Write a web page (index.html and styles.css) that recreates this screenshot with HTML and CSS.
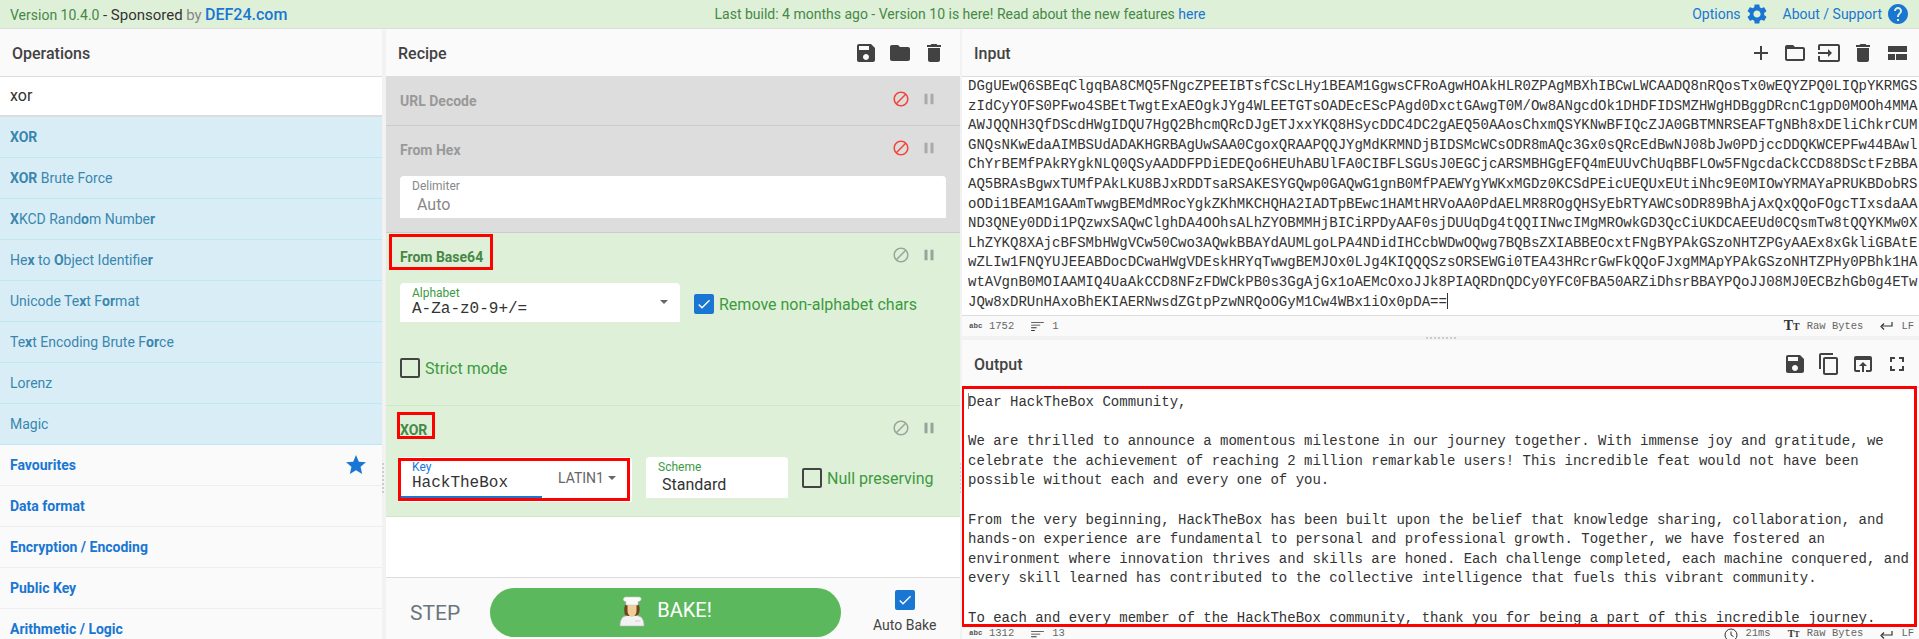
FILE: index.html
```html
<!DOCTYPE html>
<html lang="en">
<head>
    <meta charset="UTF-8">
    <title>CyberChef</title>
    <link rel="stylesheet" href="styles.css">
</head>
<body>
<div id="banner">
    <div class="banner-left"><span class="ver">Version 10.4.0</span> <span class="dark">- Sponsored</span> <span class="grey">by</span> <span class="sponsor">DEF24.com</span></div>
    <div class="banner-mid">Last build: 4 months ago - Version 10 is here! Read about the new features <span class="link">here</span></div>
    <div class="banner-right">
        <span class="link">Options</span>
        <svg class="ico-24 blue" viewBox="0 0 24 24"><path d="M19.14 12.94c.04-.3.06-.61.06-.94 0-.32-.02-.64-.07-.94l2.03-1.58c.18-.14.23-.41.12-.61l-1.92-3.32c-.12-.22-.37-.29-.59-.22l-2.39.96c-.5-.38-1.03-.7-1.62-.94l-.36-2.54c-.04-.24-.24-.41-.48-.41h-3.84c-.24 0-.43.17-.47.41l-.36 2.54c-.59.24-1.13.57-1.62.94l-2.39-.96c-.22-.08-.47 0-.59.22L2.74 8.87c-.12.21-.08.47.12.61l2.03 1.58c-.05.3-.09.63-.09.94s.02.64.07.94l-2.03 1.58c-.18.14-.23.41-.12.61l1.92 3.32c.12.22.37.29.59.22l2.39-.96c.5.38 1.03.7 1.62.94l.36 2.54c.05.24.24.41.48.41h3.84c.24 0 .44-.17.47-.41l.36-2.54c.59-.24 1.13-.56 1.62-.94l2.39.96c.22.08.47 0 .59-.22l1.92-3.32c.12-.22.07-.47-.12-.61l-2.01-1.58zM12 15.6c-1.98 0-3.6-1.62-3.6-3.6s1.62-3.6 3.6-3.6 3.6 1.62 3.6 3.6-1.62 3.6-3.6 3.6z"/></svg>
        <span class="link about">About / Support</span>
        <svg class="ico-24 blue" viewBox="0 0 24 24"><path d="M12 2C6.48 2 2 6.48 2 12s4.48 10 10 10 10-4.48 10-10S17.52 2 12 2zm1 17h-2v-2h2v2zm2.07-7.75l-.9.92C13.45 12.9 13 13.5 13 15h-2v-.5c0-1.1.45-2.1 1.17-2.83l1.24-1.26c.37-.36.59-.86.59-1.41 0-1.1-.9-2-2-2s-2 .9-2 2H8c0-2.21 1.79-4 4-4s4 1.79 4 4c0 .88-.36 1.68-.93 2.25z"/></svg>
    </div>
</div>
<div id="main">
    <div id="ops">
        <div class="title">Operations</div>
        <div class="search">xor</div>
        <ul class="op-list">
            <li><b>XOR</b></li>
            <li><b>XOR</b> Brute Force</li>
            <li><b>X</b>KCD Rand<b>o</b>m Numbe<b>r</b></li>
            <li>He<b>x</b> to <b>O</b>bject Identifie<b>r</b></li>
            <li>Unicode Te<b>x</b>t F<b>or</b>mat</li>
            <li>Te<b>x</b>t Encoding Brute F<b>or</b>ce</li>
            <li>Lorenz</li>
            <li>Magic</li>
        </ul>
        <ul class="cat-list">
            <li>Favourites <svg class="ico-24 star blue" viewBox="0 0 24 24"><path d="M12 17.27L18.18 21l-1.64-7.19L22 9.24l-7.19-.61L12 2 9.19 8.63 2 9.24l5.46 4.55L5.82 21z"/></svg></li>
            <li>Data format</li>
            <li>Encryption / Encoding</li>
            <li>Public Key</li>
            <li>Arithmetic / Logic</li>
        </ul>
    </div>
    <div class="gutter-v"></div>
    <div id="recipe">
        <div class="title">
            Recipe
            <div class="title-icons">
                <svg class="ico-24" viewBox="0 0 24 24"><path d="M17 3H5c-1.11 0-2 .9-2 2v14c0 1.1.89 2 2 2h14c1.1 0 2-.9 2-2V7l-4-4zm-5 16c-1.66 0-3-1.34-3-3s1.34-3 3-3 3 1.34 3 3-1.34 3-3 3zm3-10H5V5h10v4z"/></svg>
                <svg class="ico-24" viewBox="0 0 24 24"><path d="M10 4H4c-1.1 0-1.99.9-1.99 2L2 18c0 1.1.9 2 2 2h16c1.1 0 2-.9 2-2V8c0-1.1-.9-2-2-2h-8l-2-2z"/></svg>
                <svg class="ico-24" viewBox="0 0 24 24"><path d="M6 19c0 1.1.9 2 2 2h8c1.1 0 2-.9 2-2V7H6v12zM19 4h-3.5l-1-1h-5l-1 1H5v2h14V4z"/></svg>
            </div>
        </div>
        <div class="rec-list">
            <div class="ing off url">
                <div class="ing-head">
                    <span class="ing-name">URL Decode</span>
                    <div class="ing-ctl">
                        <svg class="ico-18 red" viewBox="0 0 24 24"><path d="M12 2C6.48 2 2 6.48 2 12s4.48 10 10 10 10-4.48 10-10S17.52 2 12 2zM4 12c0-4.42 3.58-8 8-8 1.85 0 3.55.63 4.9 1.69L5.69 16.9C4.63 15.55 4 13.85 4 12zm8 8c-1.85 0-3.55-.63-4.9-1.69L18.31 7.1C19.37 8.45 20 10.15 20 12c0 4.42-3.58 8-8 8z"/></svg>
                        <svg class="ico-18" viewBox="0 0 24 24"><path d="M6 19h4V5H6v14zm8-14v14h4V5h-4z"/></svg>
                    </div>
                </div>
            </div>
            <div class="ing off hex">
                <div class="ing-head">
                    <span class="ing-name">From Hex</span>
                    <div class="ing-ctl">
                        <svg class="ico-18 red" viewBox="0 0 24 24"><path d="M12 2C6.48 2 2 6.48 2 12s4.48 10 10 10 10-4.48 10-10S17.52 2 12 2zM4 12c0-4.42 3.58-8 8-8 1.85 0 3.55.63 4.9 1.69L5.69 16.9C4.63 15.55 4 13.85 4 12zm8 8c-1.85 0-3.55-.63-4.9-1.69L18.31 7.1C19.37 8.45 20 10.15 20 12c0 4.42-3.58 8-8 8z"/></svg>
                        <svg class="ico-18" viewBox="0 0 24 24"><path d="M6 19h4V5H6v14zm8-14v14h4V5h-4z"/></svg>
                    </div>
                </div>
                <div class="field delim">
                    <label>Delimiter</label>
                    <div class="val sans">Auto</div>
                </div>
            </div>
            <div class="ing on b64">
                <div class="ing-head">
                    <span class="ing-name">From Base64</span>
                    <span class="mark mark-b64"></span>
                    <div class="ing-ctl">
                        <svg class="ico-18" viewBox="0 0 24 24"><path d="M12 2C6.48 2 2 6.48 2 12s4.48 10 10 10 10-4.48 10-10S17.52 2 12 2zM4 12c0-4.42 3.58-8 8-8 1.85 0 3.55.63 4.9 1.69L5.69 16.9C4.63 15.55 4 13.85 4 12zm8 8c-1.85 0-3.55-.63-4.9-1.69L18.31 7.1C19.37 8.45 20 10.15 20 12c0 4.42-3.58 8-8 8z"/></svg>
                        <svg class="ico-18" viewBox="0 0 24 24"><path d="M6 19h4V5H6v14zm8-14v14h4V5h-4z"/></svg>
                    </div>
                </div>
                <div class="row">
                    <div class="field alpha">
                        <label>Alphabet</label>
                        <div class="val">A-Za-z0-9+/=</div>
                        <span class="caret"></span>
                    </div>
                    <div class="check"><span class="box checked"><svg viewBox="0 0 24 24"><path d="M9 16.17L4.83 12l-1.41 1.41L9 19 21 7l-1.41-1.41z"/></svg></span>Remove non-alphabet chars</div>
                </div>
                <div class="check strict"><span class="box"></span>Strict mode</div>
            </div>
            <div class="ing on xor">
                <div class="ing-head">
                    <span class="ing-name">XOR</span>
                    <span class="mark mark-xor"></span>
                    <div class="ing-ctl">
                        <svg class="ico-18" viewBox="0 0 24 24"><path d="M12 2C6.48 2 2 6.48 2 12s4.48 10 10 10 10-4.48 10-10S17.52 2 12 2zM4 12c0-4.42 3.58-8 8-8 1.85 0 3.55.63 4.9 1.69L5.69 16.9C4.63 15.55 4 13.85 4 12zm8 8c-1.85 0-3.55-.63-4.9-1.69L18.31 7.1C19.37 8.45 20 10.15 20 12c0 4.42-3.58 8-8 8z"/></svg>
                        <svg class="ico-18" viewBox="0 0 24 24"><path d="M6 19h4V5H6v14zm8-14v14h4V5h-4z"/></svg>
                    </div>
                </div>
                <div class="row">
                    <div class="field key">
                        <label>Key</label>
                        <div class="val">HackTheBox</div>
                        <span class="underline"></span>
                        <span class="enc">LATIN1</span>
                        <span class="caret"></span>
                        <span class="mark mark-key"></span>
                    </div>
                    <div class="field scheme">
                        <label>Scheme</label>
                        <div class="val sans">Standard</div>
                    </div>
                    <div class="check"><span class="box"></span>Null preserving</div>
                </div>
            </div>
        </div>
        <div class="bake-bar">
            <span class="step">STEP</span>
            <div class="bake">
                <svg class="chef" viewBox="0 0 26 31">
                    <path fill="#f2f2f2" stroke="#b5b5b5" stroke-width=".6" d="M1 30c0-2 .5-7 3-9l5-2h8l5 2c2.500 2 3 7 3 9z"/>
                    <path fill="#6f4320" d="M6 9h14c1 3 1 7-1 10l-3 1H9l-3-1C5 16 5 12 6 9z"/>
                    <path fill="#f0cd97" d="M8.500 8h9v7c0 3-2.500 6-4.500 6s-4.500-3-4.500-6z"/>
                    <path fill="#fafafa" stroke="#c9c9c9" stroke-width=".6" d="M7 9V5.500C3.500 5.500 3.500 1 7 1h13c3 0 3 4.500-1 4.500V9z"/>
                    <path fill="none" stroke="#bbb" stroke-width=".6" d="M16 25h5"/>
                </svg>
                <span>BAKE!</span>
            </div>
            <div class="auto">
                <span class="box checked"><svg viewBox="0 0 24 24"><path d="M9 16.17L4.83 12l-1.41 1.41L9 19 21 7l-1.41-1.41z"/></svg></span>
                <span>Auto Bake</span>
            </div>
        </div>
    </div>
    <div class="gutter-v thin"></div>
    <div id="io">
        <div class="title">
            Input
            <div class="title-icons io-icons">
                <svg class="ico-24" viewBox="0 0 24 24"><path d="M19 13h-6v6h-2v-6H5v-2h6V5h2v6h6v2z"/></svg>
                <svg class="ico-24" viewBox="0 0 24 24"><path d="M20 6h-8l-2-2H4c-1.1 0-1.99.9-1.99 2L2 18c0 1.1.9 2 2 2h16c1.1 0 2-.9 2-2V8c0-1.1-.9-2-2-2zm0 12H4V8h16v10z"/></svg>
                <svg class="ico-24" viewBox="0 0 24 24"><path d="M21 3.01H3c-1.1 0-2 .9-2 2V9h2V4.99h18v14.03H3V15H1v4.01c0 1.1.9 1.98 2 1.98h18c1.1 0 2-.88 2-1.98v-14c0-1.11-.9-2-2-2zM11 16l4-4-4-4v3H1v2h10v3z"/></svg>
                <svg class="ico-24" viewBox="0 0 24 24"><path d="M6 19c0 1.1.9 2 2 2h8c1.1 0 2-.9 2-2V7H6v12zM19 4h-3.5l-1-1h-5l-1 1H5v2h14V4z"/></svg>
                <svg class="ico-24" viewBox="0 0 24 24"><path d="M3 19h7v-6H3v6zm8 0h11v-6H11v6zM3 5v6h19V5H3z"/></svg>
            </div>
        </div>
        <pre class="text in-text">DGgUEwQ6SBEqClgqBA8CMQ5FNgcZPEEIBTsfCScLHy1BEAM1GgwsCFRoAgwHOAkHLR0ZPAgMBXhIBCwLWCAADQ8nRQosTx0wEQYZPQ0LIQpYKRMGS
zIdCyYOFS0PFwo4SBEtTwgtExAEOgkJYg4WLEETGTsOADEcEScPAgd0DxctGAwgT0M/Ow8ANgcdOk1DHDFIDSMZHWgHDBggDRcnC1gpD0MOOh4MMA
AWJQQNH3QfDScdHWgIDQU7HgQ2BhcmQRcDJgETJxxYKQ8HSycDDC4DC2gAEQ50AAosChxmQSYKNwBFIQcZJA0GBTMNRSEAFTgNBh8xDEliChkrCUM
GNQsNKwEdaAIMBSUdADAKHGRBAgUwSAA0CgoxQRAAPQQJYgMdKRMNDjBIDSMcWCsODR8mAQc3Gx0sQRcEdBwNJ08bJw0PDjccDDQKWCEPFw44BAwl
ChYrBEMfPAkRYgkNLQ0QSyAADDFPDiEDEQo6HEUhABUlFA0CIBFLSGUsJ0EGCjcARSMBHGgEFQ4mEUUvChUqBBFLOw5FNgcdaCkCCD88DSctFzBBA
AQ5BRAsBgwxTUMfPAkLKU8BJxRDDTsaRSAKESYGQwp0GAQwG1gnB0MfPAEWYgYWKxMGDz0KCSdPEicUEQUxEUtiNhc9E0MIOwYRMAYaPRUKBDobRS
oODi1BEAM1GAAmTwwgBEMdMRocYgkZKhMKCHQHA2IADTpBEwc1HAMtHRVoAA0PdAELMR8ROgQHSyEbRTYAWCsODR89BhAjAxQxQQoFOgcTIxsdaAA
ND3QNEy0DDi1PQzwxSAQwClghDA4OOhsALhZYOBMMHjBICiRPDyAAF0sjDUUqDg4tQQIINwcIMgMROwkGD3QcCiUKDCAEEUd0CQsmTw8tQQYKMw0X
LhZYKQ8XAjcBFSMbHWgVCw50Cwo3AQwkBBAYdAUMLgoLPA4NDidIHCcbWDwOQwg7BQBsZXIABBEOcxtFNgBYPAkGSzoNHTZPGyAAEx8xGkliGBAtE
wZLIw1FNQYUJEEABDocDCwaHWgVDEskHRYqTwwgBEMJOx0LJg4KIQQQSzsORSEWGi0TEA43HRcrGwFkQQoFJxgMMApYPAkGSzoNHTZPHy0PBhk1HA
wtAVgnB0MOIAAMIQ4UaAkCCD8NFzFDWCkPB0s3GgAjGx1oAEMcOxoJJk8PIAQRDnQDCy0YFC0FBA50ARZiDhsrBBAYPQoJJ08MJ0ECBzhGb0g4ETw
JQw8xDRUnHAxoBhEKIAERNwsdZGtpPzwNRQoOGyM1Cw4WBx1iOx0pDA==<span class="cursor"></span></pre>
        <div class="status">
            <div class="stat-l">
                <span class="abc">abc</span><span class="num">1752</span>
                <svg class="lines" viewBox="0 0 14 11"><path d="M0 1h14v1H0zM0 4h10v1H0zM0 7h6v1H0zM0 10h4v1H0z"/></svg><span class="num">1</span>
            </div>
            <div class="stat-r">
                <span class="tt">T<small>T</small></span><span class="num">Raw Bytes</span>
                <svg class="ret" viewBox="0 0 14 10"><path d="M13 0v4H3M5 1.500L2 4.500 5 7.500" transform="translate(0 1)"/></svg><span class="num">LF</span>
            </div>
        </div>
        <div class="gutter-h"></div>
        <div class="title">
            Output
            <div class="title-icons io-icons">
                <svg class="ico-24" viewBox="0 0 24 24"><path d="M17 3H5c-1.11 0-2 .9-2 2v14c0 1.1.89 2 2 2h14c1.1 0 2-.9 2-2V7l-4-4zm-5 16c-1.66 0-3-1.34-3-3s1.34-3 3-3 3 1.34 3 3-1.34 3-3 3zm3-10H5V5h10v4z"/></svg>
                <svg class="ico-24" viewBox="0 0 24 24"><path d="M16 1H4c-1.1 0-2 .9-2 2v14h2V3h12V1zm3 4H8c-1.1 0-2 .9-2 2v14c0 1.1.9 2 2 2h11c1.1 0 2-.9 2-2V7c0-1.1-.9-2-2-2zm0 16H8V7h11v14z"/></svg>
                <svg class="ico-24" viewBox="0 0 24 24"><path d="M19 4H5c-1.11 0-2 .9-2 2v12c0 1.1.89 2 2 2h4v-2H5V8h14v10h-4v2h4c1.1 0 2-.9 2-2V6c0-1.1-.89-2-2-2zm-7 6l-4 4h3v6h2v-6h3l-4-4z"/></svg>
                <svg class="ico-24" viewBox="0 0 24 24"><path d="M7 14H5v5h5v-2H7v-3zm-2-4h2V7h3V5H5v5zm12 7h-3v2h5v-5h-2v3zM14 5v2h3v3h2V5h-5z"/></svg>
            </div>
        </div>
        <pre class="text out-text"><span class="cursor first"></span>Dear HackTheBox Community,

We are thrilled to announce a momentous milestone in our journey together. With immense joy and gratitude, we
celebrate the achievement of reaching 2 million remarkable users! This incredible feat would not have been
possible without each and every one of you.

From the very beginning, HackTheBox has been built upon the belief that knowledge sharing, collaboration, and
hands-on experience are fundamental to personal and professional growth. Together, we have fostered an
environment where innovation thrives and skills are honed. Each challenge completed, each machine conquered, and
every skill learned has contributed to the collective intelligence that fuels this vibrant community.

To each and every member of the HackTheBox community, thank you for being a part of this incredible journey.</pre>
        <div class="status out-status">
            <div class="stat-l">
                <span class="abc">abc</span><span class="num">1312</span>
                <svg class="lines" viewBox="0 0 14 11"><path d="M0 1h14v1H0zM0 4h10v1H0zM0 7h6v1H0zM0 10h4v1H0z"/></svg><span class="num">13</span>
            </div>
            <div class="stat-r">
                <svg class="clock" viewBox="0 0 14 14"><circle cx="7" cy="7" r="6"/><path d="M7 3.500V7l2.500 1.500"/></svg><span class="num">21ms</span>
                <span class="tt">T<small>T</small></span><span class="num">Raw Bytes</span>
                <svg class="ret" viewBox="0 0 14 10"><path d="M13 0v4H3M5 1.500L2 4.500 5 7.500" transform="translate(0 1)"/></svg><span class="num">LF</span>
            </div>
        </div>
    </div>
</div>
</body>
</html>
```

FILE: styles.css
```css
*{
    margin: 0;
    padding: 0;
    box-sizing: border-box;
}
html, body{
    height: 100%;
    overflow: hidden;
}
body{
    font-family: Roboto, "Liberation Sans", sans-serif;
    font-size: 14px;
    color: #333;
    background: #fff;
}
ul{
    list-style: none;
}
svg{
    display: block;
    flex: none;
    fill: currentColor;
}
.ico-18{ width: 18px; height: 18px; }
.ico-24{ width: 24px; height: 24px; }
.blue{ color: #1976d2; }
.red{ color: #f44336; }

#banner{
    height: 29px;
    background: #dff0d8;
    border-bottom: 1px solid #ddd;
    display: grid;
    grid-template-columns: 1fr auto 1fr;
    align-items: center;
    padding: 0 9px 0 10px;
    color: #468847;
}
.dark{ color: #333; font-size: 15px; }
.grey{ color: #888; font-size: 15px; }
.sponsor{ color: #1976d2; font-weight: 500; font-size: 16px; }
.link{ color: #1976d2; }
.banner-right{
    display: flex;
    align-items: center;
    justify-content: flex-end;
    gap: 4px;
}
.banner-right .about{
    margin-left: 10px;
}

#main{
    display: flex;
    height: 610px;
    background: #f2f2f2;
}
.gutter-v{
    width: 4px;
    flex: none;
}
.gutter-v.thin{
    width: 2px;
}
.gutter-v::after{
    content: "";
    display: block;
    width: 2px;
    height: 30px;
    margin-top: 434px;
    border-left: 2px dotted #ccc;
}
.gutter-v.thin::after{
    margin-left: -1px;
}
#ops{
    width: 382px;
    flex: none;
    background: #fff;
    overflow: hidden;
}
#recipe{
    width: 574px;
    flex: none;
    background: #fff;
    display: flex;
    flex-direction: column;
}
#io{
    flex: 1;
    min-width: 0;
    background: #fff;
    display: flex;
    flex-direction: column;
    overflow: hidden;
}

.title{
    height: 48px;
    background: #fafafa;
    border-bottom: 1px solid #ddd;
    display: flex;
    align-items: center;
    justify-content: space-between;
    padding: 2px 0 0 12px;
    font-size: 16px;
    font-weight: 500;
    color: #424242;
    flex: none;
}
.title-icons{
    display: flex;
    align-items: center;
    gap: 10px;
    padding-right: 14px;
    margin-top: -2px;
    color: #424242;
}
.io-icons{
    padding-right: 10px;
}

.search{
    height: 40px;
    border-bottom: 2px solid #ddd;
    padding: 0 10px;
    line-height: 38px;
    font-size: 16px;
    color: #333;
}
.op-list li, .cat-list li{
    height: 41px;
    padding: 0 10px;
    line-height: 40px;
    font-size: 14px;
}
.op-list li{
    background: #d9edf7;
    border-bottom: 1px solid #bce8f1;
    color: #3a87ad;
}
.op-list b{
    font-weight: 700;
}
.cat-list li{
    background: #fafafa;
    border-bottom: 1px solid #eee;
    color: #1976d2;
    font-weight: 700;
    display: flex;
    align-items: center;
    justify-content: space-between;
}
.star{
    margin-right: 4px;
}

.rec-list{
    flex: 1;
}
.ing{
    position: relative;
    border-bottom: 1px solid #ccc;
    padding: 0 14px;
}
.ing.off{
    background: #ddd;
    color: #999;
}
.ing.on{
    background: #dff0d8;
    border-bottom-color: #d0e6c6;
    color: #468847;
}
.url{ height: 49px; }
.hex{ height: 107px; }
.b64{ height: 173px; }
.xor{ height: 111px; }
.ing-head{
    height: 46px;
    display: flex;
    align-items: center;
    justify-content: space-between;
}
.ing-name{
    font-size: 14px;
    font-weight: 700;
    margin-top: 2px;
}
.ing-ctl{
    display: flex;
    gap: 10px;
    padding-right: 8px;
    margin-top: -2px;
    color: #aaa;
}
.on .ing-ctl{
    color: #9aa39a;
}
.mark{
    position: absolute;
    border: 3px solid #f00;
}
.mark-b64{ left: 3px; top: 1px; width: 104px; height: 36px; }
.mark-xor{ left: 11px; top: 6px; width: 38px; height: 27px; }
.mark-key{ left: 0; top: 1px; width: 232px; height: 43px; }

.field{
    position: relative;
    background: #fff;
    border-radius: 4px 4px 0 0;
    padding: 3px 12px 0;
    color: #333;
}
.field label{
    display: block;
    font-size: 12px;
    line-height: 14px;
}
.val{
    font-family: "Liberation Mono", monospace;
    font-size: 16px;
    line-height: 19px;
    color: #333;
}
.val.sans{
    font-family: Roboto, sans-serif;
    padding-left: 4px;
}
.delim{
    height: 42px;
    margin-top: 4px;
    color: #888;
}
.delim .val{
    color: #888;
    margin-top: 2px;
    padding-left: 5px;
}
.row{
    display: flex;
    align-items: center;
}
.b64 .row{
    margin-top: 4px;
}
.alpha{
    width: 280px;
    height: 39px;
}
.alpha label, .scheme label{
    color: #3c9a3f;
}
.alpha .caret{
    right: 12px;
    top: 17px;
}
.caret{
    position: absolute;
    width: 0;
    height: 0;
    border-left: 4px solid transparent;
    border-right: 4px solid transparent;
    border-top: 4px solid #666;
}
.check{
    display: flex;
    align-items: center;
    gap: 5px;
    font-size: 16px;
    color: #3c9a3f;
}
.row .check{
    margin-left: 14px;
}
.b64 .row .check{
    margin-top: 3px;
}
.strict{
    margin-top: 36px;
}
.box{
    width: 20px;
    height: 20px;
    border: 2px solid #444;
    border-radius: 2px;
    flex: none;
    display: flex;
    align-items: center;
    justify-content: center;
}
.box.checked{
    background: #1976d2;
    border-color: #1976d2;
    color: #fff;
}
.box svg{
    width: 16px;
    height: 16px;
}
.xor .row{
    margin-top: 5px;
    align-items: flex-start;
}
.xor .row .check{
    margin-top: 11px;
}
.key{
    width: 234px;
    height: 45px;
    margin-left: -2px;
    padding-left: 14px;
}
.key label{
    color: #1976d2;
}
.underline{
    position: absolute;
    left: 2px;
    bottom: 4px;
    width: 142px;
    height: 2px;
    background: #1976d2;
}
.enc{
    position: absolute;
    left: 160px;
    top: 13px;
    font-size: 14px;
    line-height: 16px;
    color: #666;
}
.key .caret{
    right: 16px;
    top: 19px;
}
.scheme{
    width: 142px;
    height: 41px;
    margin-left: 14px;
}
.scheme .val{
    margin-top: 1px;
}

.bake-bar{
    height: 62px;
    flex: none;
    background: #fafafa;
    border-top: 1px solid #ddd;
    display: flex;
    align-items: center;
    padding-left: 24px;
}
.step{
    font-size: 21px;
    color: #6c757d;
    width: 80px;
    margin-top: 8px;
}
.bake{
    width: 351px;
    height: 49px;
    background: #5cb85c;
    border-radius: 25px;
    color: #fff;
    font-size: 20px;
    display: flex;
    align-items: center;
    justify-content: center;
    gap: 12px;
    margin-top: 8px;
}
.bake span{
    margin-top: -5px;
}
.chef{
    width: 26px;
    height: 31px;
    margin-top: -3px;
}
.auto{
    margin-left: 32px;
    margin-top: 6px;
    display: flex;
    flex-direction: column;
    align-items: center;
    gap: 7px;
    font-size: 14px;
    line-height: 16px;
    color: #444;
}

.text{
    font-family: "Liberation Mono", monospace;
    font-size: 14px;
    line-height: 19.6px;
    color: #333;
    white-space: pre;
    overflow: hidden;
}
.in-text{
    height: 238px;
    padding: 0 6px;
    flex: none;
}
.cursor{
    display: inline-block;
    width: 1px;
    height: 16px;
    background: #333;
    vertical-align: -3px;
}
.cursor.first{
    margin-right: -1px;
    background: #888;
}
.out-text{
    height: 241px;
    flex: none;
    border: 3px solid #f00;
    padding: 4px 4px 0;
    margin: -2px 2px 0 -1px;
}
.status{
    height: 21px;
    flex: none;
    background: #fafafa;
    border-top: 1px solid #ddd;
    display: flex;
    align-items: center;
    justify-content: space-between;
    padding: 0 5px 0 7px;
    font-family: "Liberation Mono", monospace;
    font-size: 10.5px;
    color: #555;
}
.out-status{
    border-top: 0;
    height: 12px;
}
.out-status svg{
    margin-top: 3px;
}
.out-status .tt{
    font-size: 10px;
}
.out-status .tt small{
    font-size: 8px;
}
.stat-l, .stat-r{
    display: flex;
    align-items: center;
}
.abc{
    font-size: 7.5px;
    font-weight: 700;
    width: 20px;
}
.num{
    color: #666;
}
.lines{
    width: 13px;
    height: 10px;
    margin: 0 8px 0 17px;
    fill: #333;
}
.tt{
    font-family: "Liberation Serif", serif;
    font-weight: 700;
    font-size: 14px;
    color: #333;
    margin-right: 7px;
}
.tt small{
    font-size: 10px;
}
.ret{
    width: 14px;
    height: 10px;
    margin: 0 8px 0 16px;
    fill: none;
    stroke: #333;
    stroke-width: 1.2;
}
.clock{
    width: 14px;
    height: 14px;
    margin-right: 7px;
    fill: none;
    stroke: #333;
    stroke-width: 1;
}
.stat-r .clock + .num{
    margin-right: 17px;
}
.gutter-h{
    height: 4px;
    flex: none;
    background: #f2f2f2;
    display: flex;
    justify-content: center;
    align-items: center;
}
.gutter-h::after{
    content: "";
    width: 30px;
    border-top: 2px dotted #ccc;
}
```
